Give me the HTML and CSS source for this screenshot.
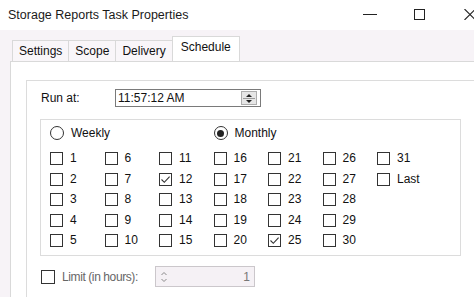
FILE: index.html
```html
<!DOCTYPE html>
<html lang="en">

<head>
  <meta charset="UTF-8">
  <title>Storage Reports Task Properties</title>
  <link rel="stylesheet" href="styles.css">
</head>

<body>
  <div class="window">
    <div class="titlebar">
      <span class="title">Storage Reports Task Properties</span>
      <div class="controls">
        <svg class="ctl-min" width="14" height="11" viewBox="0 0 14 11"><path d="M0 5.5H14" stroke="#222" stroke-width="1"/></svg>
        <svg class="ctl-max" width="11" height="11" viewBox="0 0 11 11"><rect x="0.5" y="0.5" width="10" height="10" fill="none" stroke="#222" stroke-width="1"/></svg>
        <svg class="ctl-close" width="10" height="11" viewBox="0 0 10 11"><path d="M0.5 0 L11.5 11 M11.5 0 L0.5 11" stroke="#222" stroke-width="1.1"/></svg>
      </div>
    </div>

    <div class="dialog">
      <div class="tabs">
        <div class="tab">Settings</div>
        <div class="tab">Scope</div>
        <div class="tab">Delivery</div>
        <div class="tab active">Schedule</div>
      </div>

      <div class="panel">
        <div class="group">
          <div class="run-row">
            <span class="run-label">Run at:</span>
            <div class="timebox">
              <span class="time-value">11:57:12 AM</span>
              <span class="time-spin">
                <svg width="14" height="13" viewBox="0 0 14 13">
                  <path d="M4 5 L7 2 L10 5 Z" fill="#222"/>
                  <path d="M1 6.5 H13" stroke="#9a9a9a" stroke-width="1"/>
                  <path d="M4 8 L7 11 L10 8 Z" fill="#222"/>
                </svg>
              </span>
            </div>
          </div>

          <div class="days-box">
            <div class="radios">
              <label class="radio"><span class="radio-dot"></span>Weekly</label>
              <label class="radio radio-monthly"><span class="radio-dot checked"></span>Monthly</label>
            </div>
            <div class="days" id="days"></div>
          </div>

          <div class="limit-row">
            <span class="box"></span>
            <span class="limit-label">Limit (in hours):</span>
            <div class="limit-spin">
              <svg width="10" height="14" viewBox="0 0 10 14">
                <path d="M2.5 5 L5 2.5 L7.5 5" fill="none" stroke="#8a8a8a" stroke-width="1"/>
                <path d="M2.5 9 L5 11.5 L7.5 9" fill="none" stroke="#8a8a8a" stroke-width="1"/>
              </svg>
              <span class="limit-value">1</span>
            </div>
          </div>
        </div>
      </div>
    </div>
  </div>

  <script>
    document.addEventListener('DOMContentLoaded', () => {
      const daysDiv = document.getElementById('days');
      const checked = [12, 25];
      const tick = '<svg width="11" height="11" viewBox="0 0 11 11"><path d="M1.5 5.5 L4.3 8.3 L9.6 2.6" fill="none" stroke="#333" stroke-width="1.1"/></svg>';

      // 7 columns, 5 rows: days go down each column
      for (let row = 0; row < 5; row++) {
        for (let col = 0; col < 7; col++) {
          const day = col * 5 + row + 1;
          let text = '';
          if (day <= 31) {
            text = String(day);
          } else if (col === 6 && row === 1) {
            text = 'Last';
          }
          const cell = document.createElement('div');
          cell.className = 'day';
          if (text !== '') {
            const isChecked = checked.includes(day);
            cell.innerHTML = `<span class="box">${isChecked ? tick : ''}</span><span class="day-label">${text}</span>`;
          }
          daysDiv.appendChild(cell);
        }
      }
    });
  </script>
</body>

</html>
```

FILE: styles.css
```css
html,
body {
  margin: 0;
  padding: 0;
  overflow: hidden;
}

body {
  width: 474px;
  height: 297px;
  font-family: "Liberation Sans", Arial, sans-serif;
  font-size: 12px;
  color: #111;
  background-color: #f7f3f7;
}

.window {
  width: 474px;
  height: 297px;
  overflow: hidden;
}

.titlebar {
  display: flex;
  align-items: center;
  height: 30px;
  padding-left: 8px;
  background-color: #fff;
}

.title {
  flex: 1;
  font-size: 12.5px;
  color: #1a1a1a;
}

.controls {
  display: flex;
  align-items: center;
  margin-top: -2px;
}

.ctl-max {
  margin-left: 37px;
}

.ctl-close {
  margin-left: 39px;
}

.dialog {
  padding-left: 10px;
  padding-top: 7px;
}

.tabs {
  display: flex;
  align-items: flex-end;
  height: 24px;
  padding-left: 2px;
  position: relative;
  z-index: 1;
}

.tab {
  height: 20px;
  line-height: 20px;
  padding: 0 6px;
  border: 1px solid #d9d9d9;
  border-bottom: none;
  margin-left: -1px;
  background-color: #f9f6f9;
  color: #111;
}

.tab:first-child {
  margin-left: 0;
}

.tab.active {
  height: 24px;
  line-height: 21px;
  padding: 0 8px;
  margin-left: -1px;
  margin-right: -2px;
  background-color: #fff;
}

.panel {
  background-color: #fff;
  border-top: 1px solid #d9d9d9;
  border-left: 1px solid #d9d9d9;
  padding: 18px 0 0 15px;
}

.group {
  border: 1px solid #dcdcdc;
  border-right: none;
  border-bottom: none;
  padding: 8px 0 10px 13px;
}

.run-row {
  display: flex;
  align-items: center;
}

.run-label {
  width: 74px;
  padding-left: 1px;
}

.timebox {
  display: flex;
  align-items: center;
  box-sizing: border-box;
  width: 146px;
  height: 18px;
  border: 1px solid #7a7a7a;
  background-color: #fff;
}

.time-value {
  flex: 1;
  padding-left: 2px;
  color: #111;
}

.time-spin {
  display: flex;
  margin-right: 3px;
  background-color: #e6e6e6;
  border: 1px solid #adadad;
  box-sizing: border-box;
  height: 14px;
}

.time-spin svg {
  margin-top: -0.5px;
}

.days-box {
  box-sizing: border-box;
  width: 421px;
  height: 137px;
  margin-top: 12px;
  border: 1px solid #dcdcdc;
  padding: 6px 0 0 9px;
}

.radios,
.days {
  display: grid;
  grid-template-columns: repeat(7, 54.5px);
}

.radios {
  height: 14px;
}

.radio {
  display: flex;
  align-items: center;
  grid-column: span 3;
  line-height: 14px;
}

.radio-monthly {
  grid-column: span 4;
}

.radio-dot {
  box-sizing: border-box;
  display: flex;
  align-items: center;
  justify-content: center;
  width: 14px;
  height: 14px;
  margin-right: 7px;
  border: 1px solid #333;
  border-radius: 50%;
  background-color: #fff;
}

.radio-dot.checked::after {
  content: "";
  width: 7px;
  height: 7px;
  border-radius: 50%;
  background-color: #222;
}

.days {
  margin-top: 12px;
  grid-auto-rows: 13px;
  row-gap: 7.5px;
}

.day {
  display: flex;
  align-items: center;
  height: 13px;
}

.box {
  box-sizing: border-box;
  display: flex;
  align-items: center;
  justify-content: center;
  flex: none;
  width: 13px;
  height: 13px;
  border: 1px solid #333;
  background-color: #fff;
}

.day-label {
  margin-left: 7px;
  line-height: 13px;
}

.limit-row {
  display: flex;
  align-items: center;
  margin-top: 10px;
  padding-left: 1px;
}

.limit-row .box {
  width: 14px;
  height: 14px;
}

.limit-label {
  width: 93px;
  margin-left: 7px;
  color: #666;
  letter-spacing: -0.4px;
}

.limit-spin {
  display: flex;
  align-items: center;
  box-sizing: border-box;
  width: 100px;
  height: 21px;
  border: 1px solid #cbc7cb;
  background-color: #f5f1f5;
  padding: 0 4px 0 3px;
}

.limit-value {
  flex: 1;
  text-align: right;
  color: #777;
}
```
